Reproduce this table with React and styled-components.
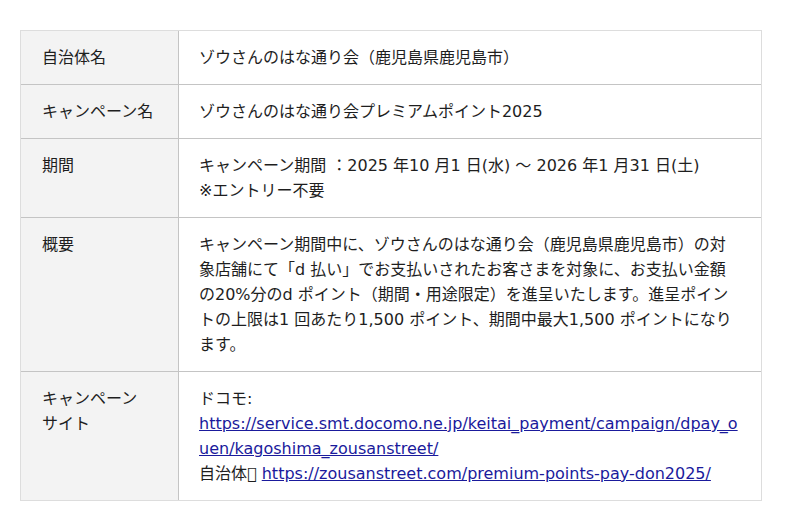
import styled, { createGlobalStyle } from "styled-components";

const GlobalStyle = createGlobalStyle`
  body {
    margin: 0;
    background: #ffffff;
    font-family: "DejaVu Sans", "Noto Sans CJK JP", sans-serif;
    color: #1e1e1e;
  }
`;

const Page = styled.div`
  padding: 30px 38px 30px 20px;
`;

const InfoTable = styled.div`
  width: 742px;
  border: 1px solid #dddddd;
  box-sizing: border-box;
`;

const Row = styled.div`
  display: grid;
  grid-template-columns: 158px 1fr;
  border-bottom: ${(p) => (p.$last ? "none" : "1px solid #c4c4c4")};
  font-size: 16px;
  line-height: 25px;
`;

const Label = styled.div`
  background: #f3f3f3;
  border-right: 1px solid #c4c4c4;
  padding: 14px 20px 14px 21px;
`;

const Content = styled.div`
  padding: 14px 22px 14px 20px;
  word-break: break-all;
`;

const Link = styled.a`
  color: #1a1a9c;
  text-decoration: underline;
`;

const rows = [
  { label: "自治体名", content: "ゾウさんのはな通り会（鹿児島県鹿児島市）" },
  { label: "キャンペーン名", content: "ゾウさんのはな通り会プレミアムポイント2025" },
  {
    label: "期間",
    content: (
      <>
        キャンペーン期間 ：2025 年10 月1 日(水) 〜 2026 年1 月31 日(土)
        <br />
        ※エントリー不要
      </>
    ),
  },
  {
    label: "概要",
    content:
      "キャンペーン期間中に、ゾウさんのはな通り会（鹿児島県鹿児島市）の対象店舗にて「d 払い」でお支払いされたお客さまを対象に、お支払い金額の20%分のd ポイント（期間・用途限定）を進呈いたします。進呈ポイントの上限は1 回あたり1,500 ポイント、期間中最大1,500 ポイントになります。",
  },
  {
    label: (
      <>
        キャンペーン
        <br />
        サイト
      </>
    ),
    content: (
      <>
        ドコモ:
        <br />
        <Link href="#">
          https://service.smt.docomo.ne.jp/keitai_payment/campaign/dpay_ouen/kagoshima_zousanstreet/
        </Link>
        <br />
        自治体{"\uE000"} <Link href="#">https://zousanstreet.com/premium-points-pay-don2025/</Link>
      </>
    ),
  },
];

export default function App() {
  return (
    <Page>
      <GlobalStyle />
      <InfoTable>
        {rows.map((row, i) => (
          <Row key={i} $last={i === rows.length - 1}>
            <Label>{row.label}</Label>
            <Content>{row.content}</Content>
          </Row>
        ))}
      </InfoTable>
    </Page>
  );
}
